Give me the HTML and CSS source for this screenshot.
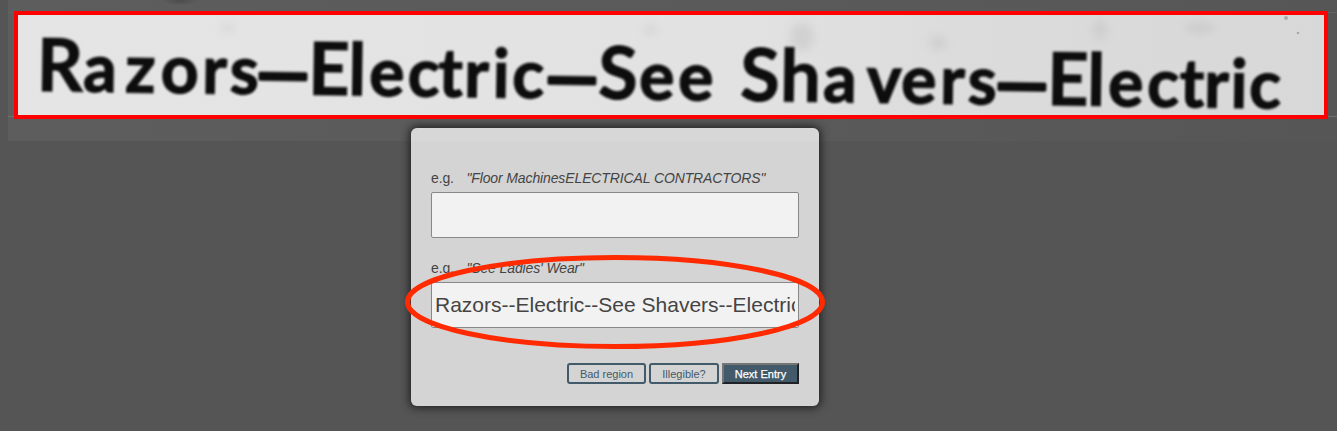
FILE: index.html
```html
<!DOCTYPE html>
<html lang="en">
<head>
<meta charset="utf-8">
<title>Transcribe entry</title>
<link rel="stylesheet" href="styles.css">
</head>
<body>
<main class="workspace">
  <section class="scan">
    <div class="scan-row">
      <div class="region">
        <svg class="scan-text" width="1306" height="100" viewBox="18 15 1306 100">
          <defs>
            <filter id="ink" x="-5%" y="-20%" width="110%" height="140%"><feGaussianBlur stdDeviation="1.3"/></filter>
            <filter id="smudge" x="-200%" y="-200%" width="500%" height="500%"><feGaussianBlur stdDeviation="5"/></filter>
          </defs>
          <g class="marks" filter="url(#smudge)">
            <ellipse cx="802" cy="37" rx="12" ry="14"/><ellipse cx="938" cy="43" rx="9" ry="7"/>
            <ellipse cx="1100" cy="30" rx="7" ry="10"/><ellipse cx="1200" cy="28" rx="16" ry="6"/>
            <ellipse cx="228" cy="28" rx="6" ry="4"/><ellipse cx="650" cy="30" rx="8" ry="4"/>
          </g>
          <circle class="speck" cx="1286" cy="18" r="2"/><circle class="speck" cx="1298" cy="33" r="1.3"/>
          <g filter="url(#ink)" transform="rotate(0.8 40 92)">
            <text class="ink" y="90.500" x="36.5 83 125 160.500 202 229.500 256 308 348 369 407.500 438 464 492.500 512 545 598 639 678 716 740 780 823 866.500 901 940 967.500 995 1047 1087 1108 1147 1179.500 1204 1230.500 1249">R<tspan class="low">azors</tspan><tspan class="dash" dy="2">—</tspan><tspan dy="-2">El</tspan><tspan class="low">ectric</tspan><tspan class="dash" dy="2">—</tspan><tspan dy="-2">S</tspan><tspan class="low">ee</tspan> Sh<tspan class="low">avers</tspan><tspan class="dash" dy="2">—</tspan><tspan dy="-2">El</tspan><tspan class="low">ectric</tspan></text>
          </g>
        </svg>
      </div>
    </div>
  </section>
  <form class="card">
    <div class="field">
      <label class="hint" for="heading">e.g.<em>"Floor MachinesELECTRICAL CONTRACTORS"</em></label>
      <input class="entry" id="heading" type="text">
    </div>
    <div class="field">
      <label class="hint" for="reference">e.g.<em>"See Ladies' Wear"</em></label>
      <input class="entry" id="reference" type="text" value="Razors--Electric--See Shavers--Electric">
    </div>
    <div class="actions">
      <button class="btn bad" type="button">Bad region</button>
      <button class="btn illegible" type="button">Illegible?</button>
      <button class="btn next" type="button">Next Entry</button>
    </div>
    <svg class="highlight" width="422" height="96" viewBox="0 0 422 96">
      <ellipse cx="210" cy="48" rx="207.500" ry="44.500"/>
    </svg>
  </form>
</main>
</body>
</html>
```
FILE: styles.css
```css
* { box-sizing: border-box; }
body {
  margin: 0;
  background: #555;
  color: #444;
  font-family: "Liberation Sans", Arial, sans-serif;
}
.workspace {
  display: flow-root;
  height: 431px;
  overflow: hidden;
}
.scan {
  height: 141px;
  margin-left: 8px;
  padding-top: 12px;
  background: radial-gradient(ellipse 18px 4px at 172px 1px, #4c4c4c, transparent), linear-gradient(90deg, #5d5d5d, #595959 70%, #565656);
}
.scan-row {
  height: 106px;
  padding-left: 6px;
  background: linear-gradient(#646464, #646464) 0 1px / 100% 1px no-repeat,
    linear-gradient(#707070, #707070) 0 105px / 100% 1px no-repeat;
}
.region {
  width: 1314px;
  height: 108px;
  margin-top: -1px;
  border: 4px solid #f00;
  background: linear-gradient(90deg, #e5e5e5, #e2e2e2 55%, #dbdbdb 75%, #d8d8d8);
  overflow: hidden;
}
.scan-text { display: block; }
.marks { fill: #b5b5b5; opacity: .35; }
.speck { fill: #aaa; }
.ink {
  font: bold 72px Lato, sans-serif;
  fill: #101010;
  stroke: #101010;
  stroke-width: 1px;
}
.low { font-size: 66px; stroke-width: 1.4px; }
.dash { font-size: 67px; stroke-width: 3.5px; stroke-linejoin: round; }
.card {
  position: relative;
  width: 408px;
  height: 278px;
  margin: -13px 0 0 411px;
  padding: 41px 20px 0;
  border-radius: 6px;
  background: linear-gradient(#d7d7d7 13px, #d4d4d4 13px);
  box-shadow: 0 0 9px 2px #222;
}
.field { height: 90px; }
.hint {
  display: flex;
  gap: 12.5px;
  height: 23px;
  font-size: 14px;
  line-height: 18px;
  letter-spacing: -.12px;
  white-space: nowrap;
}
.entry {
  display: block;
  width: 368px;
  height: 46px;
  padding: 1px 3px;
  border: 1px solid #888;
  border-radius: 2px;
  outline: 0;
  background: #f2f2f2;
  color: #444;
  font: 21px "Liberation Sans", Arial, sans-serif;
}
.actions {
  display: flex;
  justify-content: flex-end;
  gap: 3px;
  padding-top: 14px;
}
.btn {
  height: 21px;
  padding: 0;
  border: 2px solid #425a69;
  border-radius: 3px;
  background: transparent;
  color: #425a69;
  font: 11px "Liberation Sans", Arial, sans-serif;
}
.bad { width: 79px; }
.illegible { width: 70px; }
.next {
  width: 77px;
  border-color: #757575 #202124 #202124 #757575;
  border-radius: 0;
  background: #425a69;
  color: #fff;
  -webkit-text-stroke: .25px #fff;
}
.highlight {
  position: absolute;
  left: -6px;
  top: 126px;
  fill: none;
  stroke: #ff2a00;
  stroke-width: 5px;
  pointer-events: none;
}
```
